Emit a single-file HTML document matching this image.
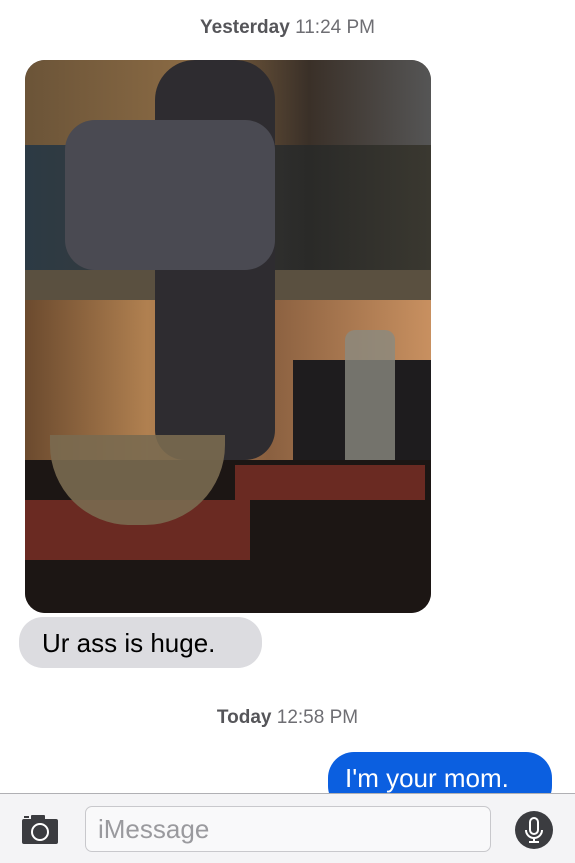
<!DOCTYPE html>
<html><head><style>
*{margin:0;padding:0;box-sizing:border-box}
body{width:575px;height:863px;background:#fff;font-family:"Liberation Sans",sans-serif;position:relative;overflow:hidden}
.ts{position:absolute;left:0;width:575px;text-align:center;font-size:19px;color:#6e6e73}
.ts b{color:#555559}
.photo{position:absolute;left:25px;top:60px;width:406px;height:553px;border-radius:20px;overflow:hidden;background:#2a221c}
.photo div{position:absolute}
</style></head><body>
<div class="ts" style="top:17px"><b>Yesterday</b> 11:24 PM</div>
<div class="photo">
 <div style="left:0;top:0;width:406px;height:90px;background:linear-gradient(90deg,#6b5438,#8a6a44 40%,#3a3028 70%,#555 100%)"></div>
 <div style="left:0;top:85px;width:406px;height:150px;background:linear-gradient(90deg,#2c3a44,#3a3a3a 40%,#2a2a28 70%,#3a3830)"></div>
 <div style="left:0;top:210px;width:406px;height:40px;background:#5a5040"></div>
 <div style="left:0;top:240px;width:406px;height:170px;background:linear-gradient(90deg,#6b4a2e,#b08050 30%,#8a6040 60%,#c89060 100%)"></div>
 <div style="left:130px;top:0;width:120px;height:400px;background:#2e2c30;border-radius:40px 40px 30px 30px"></div>
 <div style="left:40px;top:60px;width:210px;height:150px;background:#4a4a52;border-radius:30px"></div>
 <div style="left:268px;top:300px;width:138px;height:130px;background:#1e1c1e"></div>
 <div style="left:320px;top:270px;width:50px;height:190px;background:#8a8a80;border-radius:10px;opacity:.8"></div>
 <div style="left:0;top:400px;width:406px;height:153px;background:#1c1614"></div>
 <div style="left:0;top:440px;width:225px;height:60px;background:#6a2a22"></div>
 <div style="left:210px;top:405px;width:190px;height:35px;background:#6a2a22"></div>
 <div style="left:25px;top:375px;width:175px;height:90px;background:#7a6a50;border-radius:0 0 80px 80px;opacity:.9"></div>
</div>
<div style="position:absolute;left:19px;top:617px;width:243px;height:51px;background:#dcdce0;border-radius:24px;font-size:26px;color:#000;padding:11px 0 0 23px">Ur ass is huge.</div>
<div class="ts" style="top:707px"><b>Today</b> 12:58 PM</div>
<div style="position:absolute;left:328px;top:752px;width:224px;height:60px;background:#0b5fe0;border-radius:26px;font-size:26px;color:#fff;padding:11px 0 0 17px">I'm your mom.</div>
<div style="position:absolute;left:0;top:793px;width:575px;height:70px;background:#f4f4f6;border-top:1px solid #b0b0b4"></div>
<svg style="position:absolute;left:21px;top:813px" width="38" height="32" viewBox="0 0 38 32"><rect x="1" y="6" width="36" height="25" rx="2" fill="#3b3c40"/><rect x="10" y="2" width="14" height="6" rx="1" fill="#3b3c40"/><rect x="3" y="3" width="5" height="2" fill="#3b3c40"/><circle cx="19" cy="19" r="8" fill="none" stroke="#fff" stroke-width="2"/></svg>
<div style="position:absolute;left:85px;top:806px;width:406px;height:46px;border:1px solid #c8c8cc;border-radius:7px;background:#f9f9fa;font-size:26px;color:#9a9a9e;padding:7px 0 0 12px">iMessage</div>
<svg style="position:absolute;left:514px;top:810px" width="40" height="40" viewBox="0 0 40 40"><circle cx="20" cy="20" r="19" fill="#3b3c40"/><rect x="16" y="8" width="8" height="16" rx="4" fill="none" stroke="#fff" stroke-width="2"/><path d="M12 20a8 8 0 0 0 16 0M20 28v4M15 32h10" fill="none" stroke="#fff" stroke-width="2"/></svg>
</body></html>
